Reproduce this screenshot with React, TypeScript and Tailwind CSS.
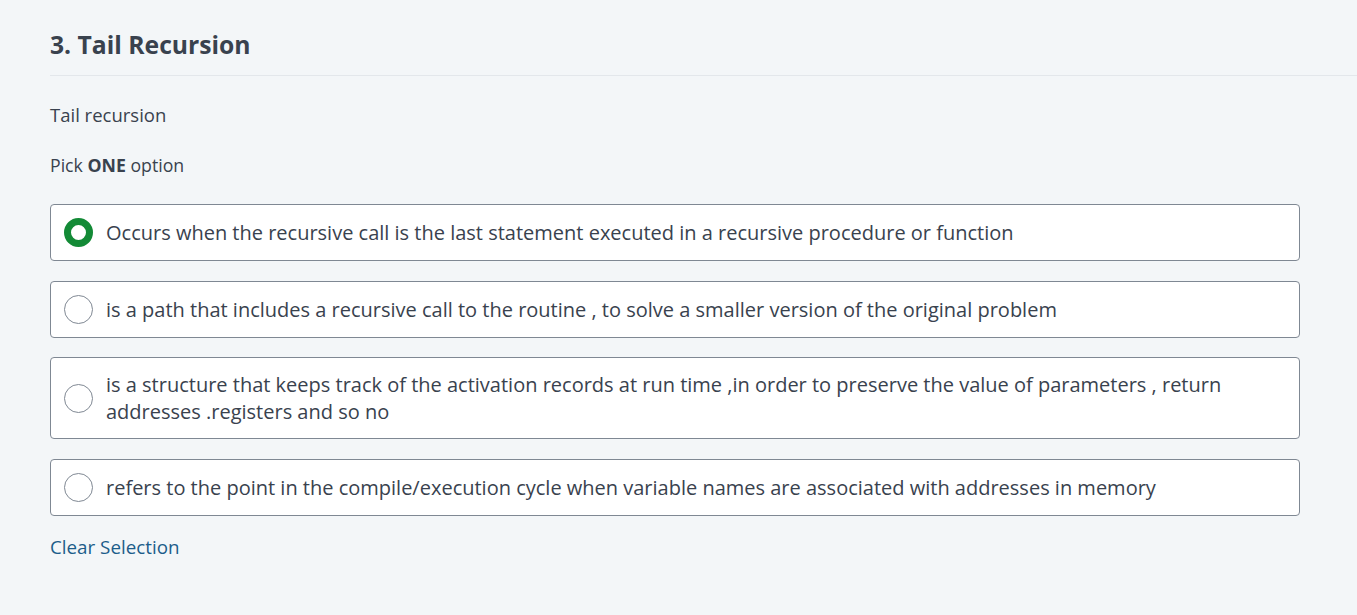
import React from 'react';

export default function App() {
  const options = [
    "Occurs when the recursive call is the last statement executed in a recursive procedure or function",
    "is a path that includes a recursive call to the routine , to solve a smaller version of the original problem",
    "is a structure that keeps track of the activation records at run time ,in order to preserve the value of parameters , return addresses .registers and so no",
    "refers to the point in the compile/execution cycle when variable names are associated with addresses in memory",
  ];
  const selected = 0;

  return (
    <div className="min-h-[615px] w-full bg-[#f3f6f8] pl-[50px] text-[#39424e] [font-family:'Open_Sans',sans-serif]">
      <div className="border-b border-[#e3e7eb] pt-[27px] pb-[12px]">
        <h2 className="text-[24.7px] font-bold leading-[36px]">3. Tail Recursion</h2>
      </div>

      <p className="mt-[25px] text-[18.5px] leading-[27px]">Tail recursion</p>
      <p className="mt-[24px] text-[17.7px] leading-[27px]">
        Pick <strong className="font-bold">ONE</strong> option
      </p>

      <div className="mt-[25px] flex w-[1250px] flex-col gap-[19.5px]">
        {options.map((text, i) => (
          <label
            key={i}
            className="flex items-center rounded-[4px] border border-[#7f8893] bg-white py-[13px] pl-[13px] pr-[20px]"
          >
            {i === selected ? (
              <span className="h-[29px] w-[29px] shrink-0 rounded-full border-[7px] border-[#138a36] bg-white" />
            ) : (
              <span className="h-[29px] w-[29px] shrink-0 rounded-full border border-[#7f8893] bg-white" />
            )}
            <span className="ml-[13px] text-[20px] leading-[27px]">{text}</span>
          </label>
        ))}
      </div>

      <button className="mt-[18px] text-[18.8px] leading-[27px] text-[#1c5d8a]">Clear Selection</button>
    </div>
  );
}
